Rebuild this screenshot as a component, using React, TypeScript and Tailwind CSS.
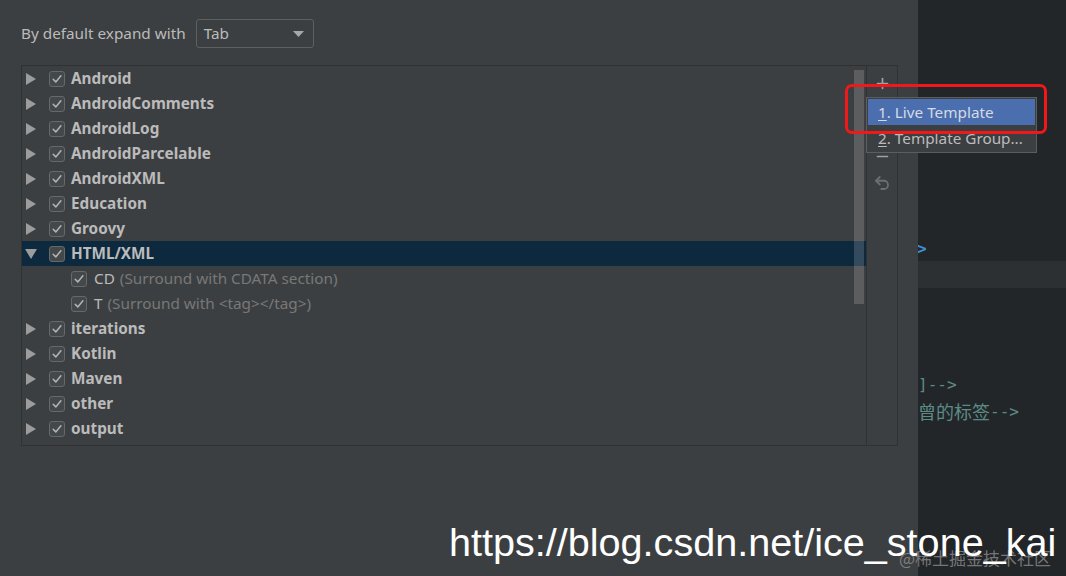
import { Plus, Minus, Undo2 } from 'lucide-react';

/**
 * Live Templates settings pane (Darcula) with the "+" popup menu open.
 */

const UI_FONT = 'font-["Noto_Sans","Open_Sans",sans-serif]';

interface Group {
    name: string;
    open?: boolean;
    children?: { abbr: string; desc: string }[];
}

const GROUPS: Group[] = [
    { name: 'Android' },
    { name: 'AndroidComments' },
    { name: 'AndroidLog' },
    { name: 'AndroidParcelable' },
    { name: 'AndroidXML' },
    { name: 'Education' },
    { name: 'Groovy' },
    {
        name: 'HTML/XML',
        open: true,
        children: [
            { abbr: 'CD', desc: '(Surround with CDATA section)' },
            { abbr: 'T', desc: '(Surround with <tag></tag>)' },
        ],
    },
    { name: 'iterations' },
    { name: 'Kotlin' },
    { name: 'Maven' },
    { name: 'other' },
    { name: 'output' },
];

const Check = () => (
    <div className="w-[16px] h-[16px] shrink-0 rounded-[3px] border border-[#66696a] bg-[#43494a] flex items-center justify-center">
        <svg width="12" height="12" viewBox="0 0 12 12" fill="none">
            <path d="M2.2 6.3 4.8 8.9 9.9 2.8" stroke="#b4b4b4" strokeWidth="1.5" strokeLinecap="round" strokeLinejoin="round" />
        </svg>
    </div>
);

const Arrow = ({ open }: { open?: boolean }) => (
    <svg width="12" height="12" viewBox="0 0 12 12" className="shrink-0">
        {open ? <path d="M0 1h12L6 11z" fill="#9c9c9c" /> : <path d="M1 0v12l10-6z" fill="#9c9c9c" />}
    </svg>
);

const GroupRow = ({ group }: { group: Group }) => (
    <>
        <div className={`h-[25px] shrink-0 flex items-center pl-[3px] ${group.open ? 'bg-[#0d293e]' : ''}`}>
            <Arrow open={group.open} />
            <div className="ml-[12px]">
                <Check />
            </div>
            <span className="ml-[6px] text-[15.3px] font-bold text-[#bbbbbb] whitespace-nowrap">{group.name}</span>
        </div>
        {group.children?.map((c) => (
            <div key={c.abbr} className="h-[25px] shrink-0 flex items-center pl-[49px]">
                <Check />
                <span className="ml-[7px] text-[15.3px] text-[#bbbbbb] whitespace-nowrap">{c.abbr}</span>
                <span className="ml-[5px] text-[15.3px] text-[#787878] whitespace-nowrap">{c.desc}</span>
            </div>
        ))}
    </>
);

const SettingsPane = () => (
    <div className={`w-[918px] shrink-0 h-full bg-[#3c3f41] pt-[19px] pl-[21px] ${UI_FONT}`}>
        {/* Expand key */}
        <div className="flex items-center h-[29px]">
            <span className="text-[15.3px] text-[#bbbbbb]">By default expand with</span>
            <div className="ml-[10px] w-[118px] h-[29px] rounded-[3px] border border-[#5e6060] flex items-center justify-between pl-[7px] pr-[9px]">
                <span className="text-[15.3px] text-[#bbbbbb]">Tab</span>
                <svg width="11" height="6" viewBox="0 0 11 6">
                    <path d="M0 0h11L5.5 6z" fill="#a8a8a8" />
                </svg>
            </div>
        </div>

        {/* Template tree + toolbar */}
        <div className="mt-[17px] w-[877px] h-[381px] border border-[#2f3133] flex">
            <div className="relative flex-1 flex flex-col overflow-hidden">
                {GROUPS.map((g) => (
                    <GroupRow key={g.name} group={g} />
                ))}
                {/* next row, only its checkbox top shows */}
                <div className="h-[25px] shrink-0 pl-[27px] pt-[4px]">
                    <Check />
                </div>
                <div className="absolute right-[2px] top-[4px] w-[10px] h-[234px] bg-white/[0.16]" />
            </div>
            <div className="w-[31px] border-l border-[#2f3133] flex flex-col items-center pt-[9px] gap-[8px] text-[#a0a0a0]">
                <Plus size={17} strokeWidth={2.4} />
                <div className="h-[16px]" />
                <div className="h-[16px]" />
                <Minus size={17} strokeWidth={2.4} />
                <Undo2 size={18} strokeWidth={2.4} className="text-[#6c6e70] mt-[1px]" />
            </div>
        </div>
    </div>
);

const EditorPane = () => (
    <div className='flex-1 h-full bg-[#232628] overflow-hidden pt-[234px] font-["DejaVu_Sans_Mono","Noto_Sans_CJK_SC",monospace] text-[16px]'>
        <div className="h-[27px] flex items-center pt-[2px] text-[#3d8fd6] font-bold -ml-[1px]">&gt;</div>
        <div className="h-[27px] bg-[#2d3032]" />
        <div className="h-[27px]" />
        <div className="h-[27px]" />
        <div className="h-[27px]" />
        <div className="h-[27px] flex items-center pt-[5px] text-[#5c8a86] whitespace-nowrap">]--&gt;</div>
        <div className="h-[27px] flex items-center pt-[5px] text-[#5c8a86] whitespace-nowrap">
            <span className="text-[18px]">曾的标签</span>--&gt;
        </div>
    </div>
);

const PopupMenu = () => (
    <div className={`absolute left-[866px] top-[97px] w-[171px] bg-[#3c3f41] border border-[#5b5d5f] p-px ${UI_FONT}`}>
        <div className="h-[26px] bg-[#4b6eaf] flex items-center pl-[10px] text-[15.3px] text-[#d4dbe5] whitespace-nowrap">
            <span className="underline underline-offset-2">1</span>. Live Template
        </div>
        <div className="h-[26px] flex items-center pl-[10px] text-[15.3px] text-[#bbbbbb] whitespace-nowrap">
            <span className="underline underline-offset-2">2</span>. Template Group...
        </div>
    </div>
);

export default function App() {
    return (
        <div className="relative w-[1066px] h-[576px] overflow-hidden flex">
            <SettingsPane />
            <EditorPane />
            <PopupMenu />

            {/* Annotation */}
            <div className="absolute left-[845px] top-[84px] w-[202px] h-[50px] rounded-[7px] border-[3px] border-[#f01818]" />

            {/* Watermarks */}
            <div className='absolute left-[899px] top-[545px] text-[17px] text-[#9a9a9a]/70 font-["Noto_Sans_CJK_SC",sans-serif] whitespace-nowrap'>
                @稀土掘金技术社区
            </div>
            <div className='absolute left-[449px] top-[518px] text-[39.6px] leading-[48px] text-white font-["Liberation_Sans",Arial,sans-serif] whitespace-nowrap'>
                https://blog.csdn.net/ice_stone_kai
            </div>
        </div>
    );
}
